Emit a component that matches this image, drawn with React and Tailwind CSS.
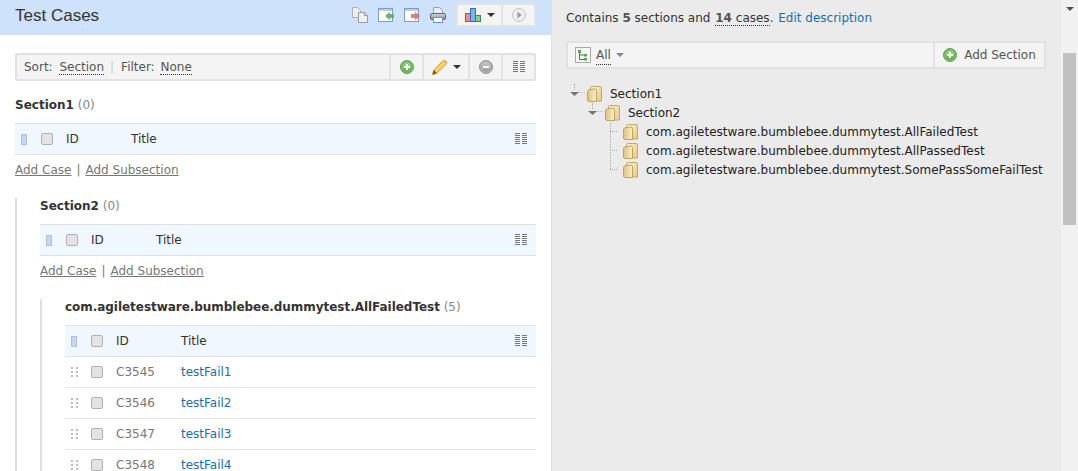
import React from "react";

const Defs = () => (
  <svg width="0" height="0" className="absolute">
    <defs>
      <linearGradient id="plusFill" x1="0" y1="0" x2="0" y2="1">
        <stop offset="0" stopColor="#9fd68c" />
        <stop offset="1" stopColor="#5fa94f" />
      </linearGradient>
      <linearGradient id="minusFill" x1="0" y1="0" x2="0" y2="1">
        <stop offset="0" stopColor="#c8c8c8" />
        <stop offset="1" stopColor="#999" />
      </linearGradient>
      <linearGradient id="folderBack" x1="0" y1="0" x2="1" y2="1">
        <stop offset="0" stopColor="#fdf3cf" />
        <stop offset="1" stopColor="#e3c987" />
      </linearGradient>
      <linearGradient id="folderFront" x1="0" y1="0" x2="1" y2="0">
        <stop offset="0" stopColor="#dcc27f" />
        <stop offset="1" stopColor="#fbf0c6" />
      </linearGradient>
      <linearGradient id="printBody" x1="0" y1="0" x2="0" y2="1">
        <stop offset="0" stopColor="#d8dade" />
        <stop offset="1" stopColor="#85888c" />
      </linearGradient>
    </defs>
  </svg>
);

const PlusIcon = () => (
  <svg width="14" height="14" viewBox="0 0 14 14" className="shrink-0">
    <circle cx="7" cy="7" r="6.5" fill="#78b868" stroke="#62a052" />
    <circle cx="7" cy="7" r="4.6" fill="url(#plusFill)" />
    <path d="M7 4v6M4 7h6" stroke="#fff" strokeWidth="2" />
  </svg>
);

const MinusIcon = () => (
  <svg width="14" height="14" viewBox="0 0 14 14">
    <circle cx="7" cy="7" r="6.5" fill="#b4b4b4" stroke="#939393" />
    <circle cx="7" cy="7" r="4.6" fill="url(#minusFill)" />
    <path d="M4 7h6" stroke="#fff" strokeWidth="2" />
  </svg>
);

const Caret = ({ color = "#333" }) => (
  <svg width="8" height="4" viewBox="0 0 8 4" className="shrink-0">
    <path d="M0 0h8L4 4z" fill={color} />
  </svg>
);

const ColumnsIcon = () => (
  <svg width="12" height="12" viewBox="0 0 12 12" fill="#777">
    {[0, 2, 4, 6, 8, 10].map((y) => (
      <g key={y}>
        <rect x="0" y={y} width="5" height="1" />
        <rect x="7" y={y} width="5" height="1" />
      </g>
    ))}
  </svg>
);

const PencilIcon = () => (
  <svg width="16" height="16" viewBox="0 0 16 16">
    <path d="M.5 15.500l1.300-4.500L11.500 1.300l3.200 3.200L5 14.200z" fill="#f7d163" stroke="#d39a35" />
    <path d="M.5 15.500l1.300-4.500 3.200 3.200z" fill="#7a5429" />
    <path d="M11.500 1.300l1-.8 3 3-.8 1z" fill="#efa06b" />
  </svg>
);

const CopyIcon = () => (
  <svg width="16" height="16" viewBox="0 0 16 16">
    <path d="M.5.500h5l3 3v7h-8z" fill="#ededed" stroke="#b0b0b0" />
    <path d="M6.500 5.500h6l3 3v7h-9z" fill="#efefef" stroke="#9a9a9a" />
    <path d="M12.500 5.500v3h3" fill="#d8d8d8" stroke="#9a9a9a" />
  </svg>
);

const WindowIcon = ({ color, edge, dir }) => (
  <svg width="16" height="14" viewBox="0 0 16 14">
    <rect x=".5" y=".5" width="14" height="13" fill="#fff" stroke="#7b9bcb" />
    <rect x="1" y="1" width="13" height="2" fill="#b7cdea" />
    <path
      d={dir === "in" ? "M7.500 8l4-3.500v2h4v3h-4v2z" : "M15.500 8l-4-3.500v2h-4v3h4v2z"}
      fill={color}
      stroke={edge}
      strokeWidth=".6"
    />
  </svg>
);

const PrintIcon = () => (
  <svg width="16" height="16" viewBox="0 0 16 16">
    <path d="M3.500.5h6l3 3v4h-9z" fill="#e6f0fb" stroke="#86a5cc" />
    <rect x=".5" y="6.500" width="15" height="6" rx="1.500" fill="url(#printBody)" stroke="#666" />
    <rect x="3.500" y="10.500" width="9" height="5" fill="#fff" stroke="#5f97d8" />
  </svg>
);

const ChartIcon = () => (
  <svg width="16" height="14" viewBox="0 0 16 14">
    <rect x=".5" y="5.500" width="5" height="8" fill="#f58a8a" stroke="#d23f3f" />
    <rect x="5.500" y=".5" width="5" height="13" fill="#86aee6" stroke="#3a6cb5" />
    <rect x="10.500" y="7.500" width="5" height="6" fill="#86cb92" stroke="#2f8f45" />
  </svg>
);

const PlayIcon = () => (
  <svg width="14" height="14" viewBox="0 0 14 14">
    <circle cx="7" cy="7" r="6.500" fill="#eee" stroke="#c4c4c4" />
    <path d="M5.500 3.500l4 3.500-4 3.500z" fill="#999" />
  </svg>
);

const FolderIcon = () => (
  <svg width="15" height="16" viewBox="0 0 15 16" className="shrink-0">
    <path d="M3.500 2Q3.500.5 5 .5h8q1.500 0 1.500 1.500v13H3.500z" fill="url(#folderBack)" stroke="#c4a968" />
    <path d="M.5 5.500q0-1 1-1.500l6-1q2 0 2 1.500v11H1.500l-1-1z" fill="url(#folderFront)" stroke="#bfa25f" />
  </svg>
);

const TreeCaret = () => (
  <span className="relative flex w-[17px] shrink-0">
    <span className="absolute left-[4px] -top-[8px] h-[6px] border-l border-dotted border-[#aaa]" />
    <span className="absolute left-[9px] top-0 w-[6px] border-t border-dotted border-[#bbb]" />
    <svg width="9" height="4" viewBox="0 0 9 4">
      <path d="M0 0h9L4.500 4z" fill="#777" />
    </svg>
  </span>
);

const TreeIcon = () => (
  <svg width="16" height="16" viewBox="0 0 16 16" className="shrink-0">
    <rect x=".5" y=".5" width="15" height="15" fill="#f8f8f8" stroke="#aaa" />
    <rect x="3" y="3" width="3" height="3" fill="#4caf3f" />
    <rect x="9" y="7" width="3" height="2.500" fill="#4caf3f" />
    <rect x="9" y="11" width="3" height="2.500" fill="#4caf3f" />
    <path d="M4.500 6v6.500H9M4.500 8H9" stroke="#666" fill="none" />
  </svg>
);

const Checkbox = () => (
  <span className="w-[12px] h-[12px] rounded-[2px] border border-[#b0b0b0] bg-[#e3e3e3] shrink-0" />
);

const GripIcon = () => (
  <svg width="8" height="11" viewBox="0 0 8 11" fill="#bbb" className="shrink-0">
    {[0, 4, 8].map((y) => (
      <g key={y}>
        <rect x="0" y={y} width="2" height="2" />
        <rect x="5" y={y} width="2" height="2" />
      </g>
    ))}
  </svg>
);

const HeaderRow = () => (
  <div className="flex items-center h-[32px] bg-[#f1f7ff] border-y border-[#e0e0e0] text-[#333] pl-[6px] pr-[9px]">
    <span className="w-[6px] h-[11px] bg-[#c4d6f5] border border-[#aebfe0] shrink-0" />
    <span className="ml-[14px] flex"><Checkbox /></span>
    <span className="ml-[13px] w-[65px]">ID</span>
    <span className="flex-1">Title</span>
    <ColumnsIcon />
  </div>
);

const CaseRow = ({ id, title }) => (
  <div className="flex items-center h-[31px] border-b border-[#e6e6e6] pl-[6px]">
    <GripIcon />
    <span className="ml-[12px] flex"><Checkbox /></span>
    <span className="ml-[13px] w-[65px] text-[#777]">{id}</span>
    <span className="text-[#1a6db5]">{title}</span>
  </div>
);

const AddLinks = () => (
  <div className="mt-[7px] h-[17px] text-[#777] leading-[17px]">
    <span className="underline">Add Case</span>
    <span className="mx-[5px]">|</span>
    <span className="underline">Add Subsection</span>
  </div>
);

const SectionTitle = ({ name, count, className = "" }) => (
  <div className="leading-[16px] h-[16px] mb-[10px] text-[#333] whitespace-nowrap">
    <span className={`font-bold ${className}`}>{name}</span>
    <span className="text-[#888]"> ({count})</span>
  </div>
);

const BarCell = ({ children, className = "" }) => (
  <div className={`flex items-center justify-center h-full border-l-2 border-[#e2e2e2] ${className}`}>
    {children}
  </div>
);

const cases = [
  ["C3545", "testFail1"],
  ["C3546", "testFail2"],
  ["C3547", "testFail3"],
  ["C3548", "testFail4"],
];

const TreeRow = ({ children, indent = "", caret, branch }) => (
  <div className={`flex items-center h-[19px] ${indent}`}>
    {caret && <TreeCaret />}
    {branch && <span className="w-[7px] h-0 mr-[6px] border-t border-dotted border-[#aaa] shrink-0" />}
    <FolderIcon />
    <span className="ml-[8px] text-[#222] whitespace-nowrap">{children}</span>
  </div>
);

export default function App() {
  return (
    <div className="flex w-[1078px] h-[471px] overflow-hidden bg-white font-['DejaVu_Sans',sans-serif] text-[12px]">
      <Defs />
      {/* left column */}
      <div className="w-[552px] shrink-0 border-r border-[#e0e0e0]">
        <div className="flex items-center h-[35px] bg-[#cfe2fb] pl-[15px] pr-[15px]">
          <h1 className="flex-1 mb-[3px] font-['Liberation_Sans',sans-serif] text-[17px] text-[#333]">Test Cases</h1>
          <div className="flex items-center gap-[10px] mr-[10px] mb-[5px]">
            <CopyIcon />
            <WindowIcon color="#6cb56c" edge="#4c9a4c" dir="in" />
            <WindowIcon color="#e07a7a" edge="#c85a5a" dir="out" />
            <PrintIcon />
          </div>
          <div className="flex items-center h-[24px] mb-[5px] bg-[#f4f4f4] border-2 border-[#e2e2e2] rounded-[2px]">
            <div className="flex items-center gap-[6px] w-[43px] justify-center"><ChartIcon /><Caret /></div>
            <BarCell className="w-[33px]"><PlayIcon /></BarCell>
          </div>
        </div>

        <div className="pl-[15px] pr-[15px] pt-[18px]">
          <div className="flex items-center h-[28px] bg-[#f4f4f4] border-2 border-[#e2e2e2] rounded-[2px] text-[#555]">
            <div className="flex-1 pl-[7px]">
              Sort: <span className="ml-[3px] border-b border-dotted border-[#333]">Section</span>
              <span className="ml-[6px] mr-[7px] text-[#ccc]">|</span>
              Filter: <span className="ml-[2px] border-b border-dotted border-[#333]">None</span>
            </div>
            <BarCell className="w-[33px]"><PlusIcon /></BarCell>
            <BarCell className="w-[46px] gap-[5px]"><PencilIcon /><Caret /></BarCell>
            <BarCell className="w-[33px]"><MinusIcon /></BarCell>
            <BarCell className="w-[33px]"><ColumnsIcon /></BarCell>
          </div>

          <div className="mt-[16px]">
            <SectionTitle name="Section1" count="0" />
            <HeaderRow />
            <AddLinks />
          </div>

          <div className="mt-[19px] border-l-2 border-[#e0e0e0] pl-[23px]">
            <SectionTitle name="Section2" count="0" />
            <HeaderRow />
            <AddLinks />

            <div className="mt-[19px] border-l-2 border-[#e0e0e0] pl-[23px]">
              <SectionTitle
                name="com.agiletestware.bumblebee.dummytest.AllFailedTest"
                count="5"
                className="tracking-[-0.04px]"
              />
              <HeaderRow />
              {cases.map(([id, title]) => (
                <CaseRow key={id} id={id} title={title} />
              ))}
            </div>
          </div>
        </div>
      </div>

      {/* right column */}
      <div className="flex-1 min-w-0 bg-[#ebebeb] pl-[14px] pr-[15px] pt-[10px]">
        <p className="text-[#333] leading-[16px] whitespace-nowrap">
          Contains <b className="text-[#555]">5</b> sections and{" "}
          <span className="ml-[1px] border-b border-dotted border-[#333]"><b className="text-[#555]">14</b> cases</span>.{" "}
          <span className="ml-[1px] text-[#1a6db5]">Edit description</span>
        </p>
        <div className="flex items-center h-[28px] mt-[15px] bg-[#f4f4f4] border-2 border-[#e2e2e2] rounded-[2px] text-[#555]">
          <div className="flex flex-1 items-center pl-[7px] gap-[5px]">
            <TreeIcon />
            <span className="border-b border-dotted border-[#333]">All</span>
            <Caret color="#888" />
          </div>
          <BarCell className="w-[111px] gap-[7px]"><PlusIcon /><span>Add Section</span></BarCell>
        </div>
        <div className="mt-[15px] pl-[4px]">
          <TreeRow caret>Section1</TreeRow>
          <TreeRow indent="ml-[18px]" caret>Section2</TreeRow>
          <div className="relative ml-[39px] pl-[1px]">
            <span className="absolute left-[1px] -top-[2px] h-[49px] border-l border-dotted border-[#aaa]" />
            <TreeRow branch>com.agiletestware.bumblebee.dummytest.AllFailedTest</TreeRow>
            <TreeRow branch>com.agiletestware.bumblebee.dummytest.AllPassedTest</TreeRow>
            <TreeRow branch>com.agiletestware.bumblebee.dummytest.SomePassSomeFailTest</TreeRow>
          </div>
        </div>
      </div>

      {/* scrollbar */}
      <div className="flex flex-col items-center w-[17px] shrink-0 bg-[#f1f1f1]">
        <div className="h-[17px] flex items-center justify-center"><Caret color="#505050" /></div>
        <div className="mt-[36px] w-[13px] h-[172px] bg-[#c1c1c1]" />
      </div>
    </div>
  );
}
